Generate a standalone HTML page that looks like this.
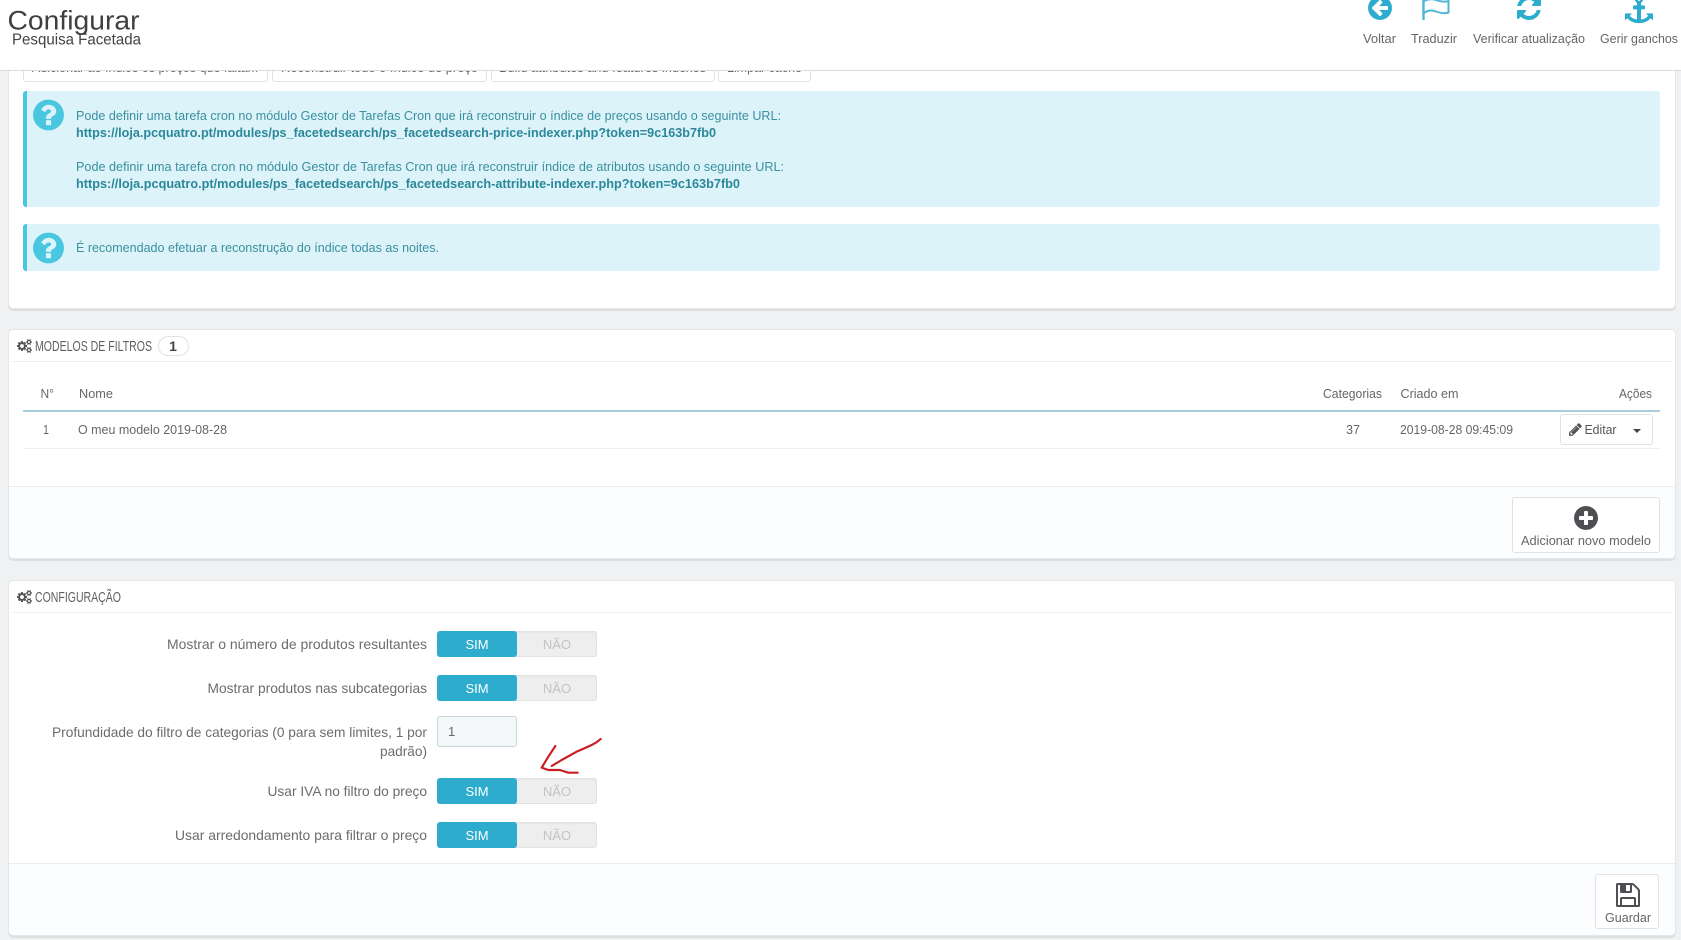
<!DOCTYPE html>
<html lang="pt">
<head>
<meta charset="utf-8">
<title>Configurar - Pesquisa Facetada</title>
<style>
html,body{margin:0;padding:0;background:#eff1f2;width:1681px;height:940px;overflow:hidden;position:relative}
div{box-sizing:border-box;position:absolute}
.panel{left:7.5px;width:1668px;background:#fff;border:1px solid #e4e6e8;border-radius:5px;box-shadow:0 2px 0 rgba(0,0,0,.07)}
.foot{background:#fcfdfe;border-top:1px solid #eaedef;left:8.5px;width:1666px}
.line{background:#eef0f2}
.alert{left:23px;width:1637px;background:#dcf4f9;border-left:4px solid #4ac7e0;border-radius:3px}
.btn{background:#fff;border:1px solid #dfe3e5;border-radius:3px}
.sw{left:437px;width:160px;height:26px;background:#eee;border-radius:3px;box-shadow:inset 0 0 0 1px #e2e2e2,inset 0 1px 2px rgba(0,0,0,.08)}
.sw:before{content:"";position:absolute;left:0;top:0;width:80px;height:26px;background:#2eacce;border-radius:3px}
#main{position:absolute;left:0;top:0;z-index:2}
#head{left:0;top:0;width:1681px;height:71px;background:#fff;border-bottom:1px solid #d9dcde;z-index:3}
text{font-family:"Liberation Sans",Arial,sans-serif;font-size:13px;fill:#666}
.h{font-size:14.5px;fill:#5f5f5f}
.i{fill:#3a8fa0}
.b{font-weight:bold;fill:#2b8799}
.l{font-size:14px;fill:#6c6c6c}
.s{font-size:13px;fill:#fff}
.n{font-size:13px;fill:#c3c3c3}
</style>
</head>
<body>

<div class="panel" style="top:-10px;height:319px"></div>
<div class="btn" style="left:23px;top:50px;width:245px;height:32px"></div>
<div class="btn" style="left:271.5px;top:50px;width:215px;height:32px"></div>
<div class="btn" style="left:491px;top:50px;width:224px;height:32px"></div>
<div class="btn" style="left:718px;top:50px;width:93px;height:32px"></div>
<div class="alert" style="top:91px;height:116px"></div>
<div class="alert" style="top:224px;height:47px"></div>

<div class="panel" style="top:329px;height:230px"></div>
<div class="line" style="left:12px;width:1660px;top:361px;height:1px"></div>
<div class="line" style="left:23px;width:1637px;top:410px;height:2px;background:#a9cedb"></div>
<div class="line" style="left:23px;width:1637px;top:448px;height:1px"></div>
<div class="btn" style="left:1560px;top:414px;width:93px;height:31px"></div>
<div class="foot" style="top:486px;height:72px;border-radius:0 0 5px 5px"></div>
<div class="btn" style="left:1512px;top:497px;width:148px;height:56px"></div>
<div style="left:158px;top:336px;width:31px;height:20px;background:#fff;border:1px solid #dfe3e5;border-radius:10px"></div>

<div class="panel" style="top:580px;height:356px"></div>
<div class="line" style="left:12px;width:1660px;top:612px;height:1px"></div>
<div class="sw" style="top:631px"></div>
<div class="sw" style="top:675px"></div>
<div style="left:437px;top:716px;width:80px;height:31px;background:#f5f8f9;border:1px solid #c7d6db;border-radius:3px"></div>
<div class="sw" style="top:778px"></div>
<div class="sw" style="top:822px"></div>
<div class="foot" style="top:863px;height:72px;border-radius:0 0 5px 5px"></div>
<div class="btn" style="left:1595px;top:874px;width:64px;height:55px"></div>

<svg id="main" width="1681" height="940" viewBox="0 0 1681 940" xmlns="http://www.w3.org/2000/svg">
  <!-- clipped toolbar buttons -->
  <text x="32" y="72" textLength="226" lengthAdjust="spacingAndGlyphs">Adicionar ao índice os preços que faltam</text>
  <text x="281" y="72" textLength="197" lengthAdjust="spacingAndGlyphs">Reconstruir todo o índice de preço</text>
  <text x="499" y="72" textLength="207" lengthAdjust="spacingAndGlyphs">Build attributes and features indexes</text>
  <text x="727" y="72" textLength="75" lengthAdjust="spacingAndGlyphs">Limpar cache</text>

  <!-- alert 1 -->
  <svg x="30.500" y="97" width="36" height="36" viewBox="0 0 1792 1792"><path fill="#4ac7e0" d="M1024 1376v-192q0-14-9-23t-23-9h-192q-14 0-23 9t-9 23v192q0 14 9 23t23 9h192q14 0 23-9t9-23zm256-672q0-88-55.500-163t-138.500-116-170-41q-243 0-371 213-15 24 8 42l132 100q7 6 19 6 16 0 25-12 53-68 86-92 34-24 86-24 48 0 85.500 26t37.500 59q0 38-20 61t-68 45q-63 28-115.500 86.500t-52.500 125.500v36q0 14 9 23t23 9h192q14 0 23-9t9-23q0-19 21.500-49.500t54.500-49.500q32-18 49-28.500t46-35 44.500-48 28-60.500 12.500-81zm384 192q0 209-103 385.500t-279.500 279.500-385.500 103-385.500-103-279.500-279.500-103-385.500 103-385.500 279.500-279.500 385.500-103 385.500 103 279.500 279.500 103 385.500z"/></svg>
  <text class="i" x="76" y="120" textLength="705" lengthAdjust="spacingAndGlyphs">Pode definir uma tarefa cron no módulo Gestor de Tarefas Cron que irá reconstruir o índice de preços usando o seguinte URL:</text>
  <text class="b" x="76" y="137" textLength="640" lengthAdjust="spacingAndGlyphs">https://loja.pcquatro.pt/modules/ps_facetedsearch/ps_facetedsearch-price-indexer.php?token=9c163b7fb0</text>
  <text class="i" x="76" y="171" textLength="708" lengthAdjust="spacingAndGlyphs">Pode definir uma tarefa cron no módulo Gestor de Tarefas Cron que irá reconstruir índice de atributos usando o seguinte URL:</text>
  <text class="b" x="76" y="188" textLength="664" lengthAdjust="spacingAndGlyphs">https://loja.pcquatro.pt/modules/ps_facetedsearch/ps_facetedsearch-attribute-indexer.php?token=9c163b7fb0</text>

  <!-- alert 2 -->
  <svg x="30.500" y="230" width="36" height="36" viewBox="0 0 1792 1792"><path fill="#4ac7e0" d="M1024 1376v-192q0-14-9-23t-23-9h-192q-14 0-23 9t-9 23v192q0 14 9 23t23 9h192q14 0 23-9t9-23zm256-672q0-88-55.500-163t-138.500-116-170-41q-243 0-371 213-15 24 8 42l132 100q7 6 19 6 16 0 25-12 53-68 86-92 34-24 86-24 48 0 85.500 26t37.500 59q0 38-20 61t-68 45q-63 28-115.500 86.500t-52.500 125.500v36q0 14 9 23t23 9h192q14 0 23-9t9-23q0-19 21.500-49.500t54.500-49.500q32-18 49-28.500t46-35 44.500-48 28-60.500 12.500-81zm384 192q0 209-103 385.500t-279.500 279.500-385.500 103-385.500-103-279.500-279.500-103-385.500 103-385.500 279.500-279.500 385.500-103 385.500 103 279.500 279.500 103 385.500z"/></svg>
  <text class="i" x="76" y="252" textLength="363" lengthAdjust="spacingAndGlyphs">É recomendado efetuar a reconstrução do índice todas as noites.</text>

  <!-- panel 2 heading -->
  <svg x="17" y="339" width="15" height="14" viewBox="0 0 1920 1792"><path fill="#555" d="M896 896q0-106-75-181t-181-75-181 75-75 181 75 181 181 75 181-75 75-181zm768 512q0-52-38-90t-90-38-90 38-38 90q0 53 37.500 90.500t90.500 37.500 90.500-37.500 37.500-90.500zm0-1024q0-52-38-90t-90-38-90 38-38 90q0 53 37.500 90.500t90.500 37.500 90.500-37.500 37.500-90.500zm-384 421v185q0 10-7 19.500t-16 10.500l-155 24q-11 35-32 76 34 48 90 115 7 11 7 20 0 12-7 19-23 30-82.500 89.500t-78.500 59.500q-11 0-21-7l-115-90q-37 19-77 31-11 108-23 155-7 24-30 24h-186q-11 0-20-7.500t-10-17.500l-23-153q-34-10-75-31l-118 89q-7 7-20 7-11 0-21-8-144-133-144-160 0-9 7-19 10-14 41-53t47-61q-23-44-35-82l-152-24q-10-1-17-9.500t-7-19.500v-185q0-10 7-19.500t16-10.500l155-24q11-35 32-76-34-48-90-115-7-11-7-20 0-12 7-20 22-30 82-89t79-59q11 0 21 7l115 90q34-18 77-32 11-108 23-154 7-24 30-24h186q11 0 20 7.500t10 17.500l23 153q34 10 75 31l118-89q8-7 20-7 11 0 21 8 144 133 144 160 0 8-7 19-12 16-42 54t-45 60q23 48 34 82l152 23q10 2 17 10.500t7 19.500zm640 533v140q0 16-149 31-12 27-30 52 51 113 51 138 0 4-4 7-122 71-124 71-8 0-46-47t-52-68q-20 2-30 2t-30-2q-14 21-52 68t-46 47q-2 0-124-71-4-3-4-7 0-25 51-138-18-25-30-52-149-15-149-31v-140q0-16 149-31 13-29 30-52-51-113-51-138 0-4 4-7 4-2 35-20t59-34 30-16q8 0 46 46.500t52 67.500q20-2 30-2t30 2q51-71 92-112l6-2q4 0 124 70 4 3 4 7 0 25-51 138 17 23 30 52 149 15 149 31zm0-1024v140q0 16-149 31-12 27-30 52 51 113 51 138 0 4-4 7-122 71-124 71-8 0-46-47t-52-68q-20 2-30 2t-30-2q-14 21-52 68t-46 47q-2 0-124-71-4-3-4-7 0-25 51-138-18-25-30-52-149-15-149-31v-140q0-16 149-31 13-29 30-52-51-113-51-138 0-4 4-7 4-2 35-20t59-34 30-16q8 0 46 46.500t52 67.500q20-2 30-2t30 2q51-71 92-112l6-2q4 0 124 70 4 3 4 7 0 25-51 138 17 23 30 52 149 15 149 31z"/></svg>
  <text class="h" x="35" y="351" textLength="117" lengthAdjust="spacingAndGlyphs">MODELOS DE FILTROS</text>
  <text x="173" y="351" text-anchor="middle" style="font-weight:bold;font-size:14px;fill:#444">1</text>

  <!-- table -->
  <text x="40.500" y="398" textLength="13.500" lengthAdjust="spacingAndGlyphs">N°</text>
  <text x="79" y="398" textLength="34" lengthAdjust="spacingAndGlyphs">Nome</text>
  <text x="1323" y="398" textLength="59" lengthAdjust="spacingAndGlyphs">Categorias</text>
  <text x="1400.500" y="398" textLength="58" lengthAdjust="spacingAndGlyphs">Criado em</text>
  <text x="1619" y="398" textLength="33" lengthAdjust="spacingAndGlyphs">Ações</text>
  <text x="43" y="434" textLength="6" lengthAdjust="spacingAndGlyphs">1</text>
  <text x="78" y="434" textLength="149" lengthAdjust="spacingAndGlyphs">O meu modelo 2019-08-28</text>
  <text x="1346" y="434" textLength="14" lengthAdjust="spacingAndGlyphs">37</text>
  <text x="1400" y="434" textLength="113" lengthAdjust="spacingAndGlyphs">2019-08-28 09:45:09</text>

  <svg x="1568" y="422" width="15" height="15" viewBox="0 0 1792 1792"><path fill="#555" d="M491 1536l91-91-235-235-91 91v107h128v128h107zm523-928q0-22-22-22-10 0-17 7l-542 542q-7 7-7 17 0 22 22 22 10 0 17-7l542-542q7-7 7-17zm-54-192l416 416-832 832h-416v-416zm683 96q0 53-37 90l-166 166-416-416 166-165q36-38 90-38 53 0 91 38l235 234q37 39 37 91z"/></svg>
  <text x="1584.500" y="434" textLength="32" lengthAdjust="spacingAndGlyphs" style="fill:#555">Editar</text>
  <path d="M1633 429h8l-4 4z" fill="#444"/>

  <!-- add button -->
  <svg x="1572" y="504" width="28" height="28" viewBox="0 0 1792 1792"><path fill="#4d4f52" d="M1344 960v-128q0-26-19-45t-45-19h-256v-256q0-26-19-45t-45-19h-128q-26 0-45 19t-19 45v256h-256q-26 0-45 19t-19 45v128q0 26 19 45t45 19h256v256q0 26 19 45t45 19h128q26 0 45-19t19-45v-256h256q26 0 45-19t19-45zm320-64q0 209-103 385.500t-279.500 279.500-385.500 103-385.500-103-279.500-279.500-103-385.500 103-385.500 279.500-279.500 385.500-103 385.500 103 279.500 279.500 103 385.500z"/></svg>
  <text x="1521" y="545" textLength="130" lengthAdjust="spacingAndGlyphs">Adicionar novo modelo</text>

  <!-- panel 3 heading -->
  <svg x="17" y="590" width="15" height="14" viewBox="0 0 1920 1792"><path fill="#555" d="M896 896q0-106-75-181t-181-75-181 75-75 181 75 181 181 75 181-75 75-181zm768 512q0-52-38-90t-90-38-90 38-38 90q0 53 37.500 90.500t90.500 37.500 90.500-37.500 37.500-90.500zm0-1024q0-52-38-90t-90-38-90 38-38 90q0 53 37.500 90.500t90.500 37.500 90.500-37.500 37.500-90.500zm-384 421v185q0 10-7 19.500t-16 10.500l-155 24q-11 35-32 76 34 48 90 115 7 11 7 20 0 12-7 19-23 30-82.500 89.500t-78.500 59.500q-11 0-21-7l-115-90q-37 19-77 31-11 108-23 155-7 24-30 24h-186q-11 0-20-7.500t-10-17.500l-23-153q-34-10-75-31l-118 89q-7 7-20 7-11 0-21-8-144-133-144-160 0-9 7-19 10-14 41-53t47-61q-23-44-35-82l-152-24q-10-1-17-9.500t-7-19.500v-185q0-10 7-19.500t16-10.500l155-24q11-35 32-76-34-48-90-115-7-11-7-20 0-12 7-20 22-30 82-89t79-59q11 0 21 7l115 90q34-18 77-32 11-108 23-154 7-24 30-24h186q11 0 20 7.500t10 17.500l23 153q34 10 75 31l118-89q8-7 20-7 11 0 21 8 144 133 144 160 0 8-7 19-12 16-42 54t-45 60q23 48 34 82l152 23q10 2 17 10.500t7 19.500zm640 533v140q0 16-149 31-12 27-30 52 51 113 51 138 0 4-4 7-122 71-124 71-8 0-46-47t-52-68q-20 2-30 2t-30-2q-14 21-52 68t-46 47q-2 0-124-71-4-3-4-7 0-25 51-138-18-25-30-52-149-15-149-31v-140q0-16 149-31 13-29 30-52-51-113-51-138 0-4 4-7 4-2 35-20t59-34 30-16q8 0 46 46.500t52 67.500q20-2 30-2t30 2q51-71 92-112l6-2q4 0 124 70 4 3 4 7 0 25-51 138 17 23 30 52 149 15 149 31zm0-1024v140q0 16-149 31-12 27-30 52 51 113 51 138 0 4-4 7-122 71-124 71-8 0-46-47t-52-68q-20 2-30 2t-30-2q-14 21-52 68t-46 47q-2 0-124-71-4-3-4-7 0-25 51-138-18-25-30-52-149-15-149-31v-140q0-16 149-31 13-29 30-52-51-113-51-138 0-4 4-7 4-2 35-20t59-34 30-16q8 0 46 46.500t52 67.500q20-2 30-2t30 2q51-71 92-112l6-2q4 0 124 70 4 3 4 7 0 25-51 138 17 23 30 52 149 15 149 31z"/></svg>
  <text class="h" x="35" y="602" textLength="86" lengthAdjust="spacingAndGlyphs">CONFIGURAÇÃO</text>

  <!-- form rows -->
  <text class="l" x="167" y="649" textLength="260" lengthAdjust="spacingAndGlyphs">Mostrar o número de produtos resultantes</text>
  <text class="s" x="477" y="649" text-anchor="middle">SIM</text><text class="n" x="557" y="649" text-anchor="middle">NÃO</text>

  <text class="l" x="207.500" y="693" textLength="219.500" lengthAdjust="spacingAndGlyphs">Mostrar produtos nas subcategorias</text>
  <text class="s" x="477" y="693" text-anchor="middle">SIM</text><text class="n" x="557" y="693" text-anchor="middle">NÃO</text>

  <text class="l" x="52" y="737" textLength="375" lengthAdjust="spacingAndGlyphs">Profundidade do filtro de categorias (0 para sem limites, 1 por</text>
  <text class="l" x="380" y="756" textLength="47" lengthAdjust="spacingAndGlyphs">padrão)</text>
  <text x="448" y="736">1</text>

  <text class="l" x="267.500" y="796" textLength="159.500" lengthAdjust="spacingAndGlyphs">Usar IVA no filtro do preço</text>
  <text class="s" x="477" y="796" text-anchor="middle">SIM</text><text class="n" x="557" y="796" text-anchor="middle">NÃO</text>

  <text class="l" x="175" y="840" textLength="252" lengthAdjust="spacingAndGlyphs">Usar arredondamento para filtrar o preço</text>
  <text class="s" x="477" y="840" text-anchor="middle">SIM</text><text class="n" x="557" y="840" text-anchor="middle">NÃO</text>

  <!-- red hand-drawn arrow -->
  <g transform="translate(480 720) scale(.3333)" fill="none" stroke="#c81e24" stroke-width="6.500" stroke-linecap="round" stroke-linejoin="round">
    <path d="M362 57Q350 68 335 75T290 95L245 120 215 138"/>
    <path d="M226 78L205 110 185 143 205 150 240 150 265 158 293 158"/>
  </g>

  <!-- save button -->
  <svg x="1614" y="881" width="28" height="28" viewBox="0 0 1792 1792"><path fill="#4d4f52" d="M512 1536h768v-384h-768v384zm896 0h128v-896q0-14-10-38.500t-20-34.500l-281-281q-10-10-34-20t-39-10v416q0 40-28 68t-68 28h-576q-40 0-68-28t-28-68v-416h-128v1280h128v-416q0-40 28-68t68-28h832q40 0 68 28t28 68v416zm-384-928v-320q0-13-9.500-22.500t-22.500-9.500h-192q-13 0-22.500 9.500t-9.500 22.500v320q0 13 9.500 22.500t22.500 9.500h192q13 0 22.500-9.500t9.500-22.500zm640 32v928q0 40-28 68t-68 28h-1344q-40 0-68-28t-28-68v-1344q0-40 28-68t68-28h928q40 0 88 20t76 48l280 280q28 28 48 76t20 88z"/></svg>
  <text x="1605" y="922" textLength="46" lengthAdjust="spacingAndGlyphs">Guardar</text>
</svg>

<div id="head">
<svg width="1681" height="70" viewBox="0 0 1681 70" xmlns="http://www.w3.org/2000/svg" style="display:block">
  <text x="7.500" y="29.500" textLength="132" lengthAdjust="spacingAndGlyphs" style="font-size:27px;fill:#3f3f3f">Configurar</text>
  <text x="12" y="44.500" textLength="129" lengthAdjust="spacingAndGlyphs" style="font-size:15.500px;fill:#444">Pesquisa Facetada</text>

  <svg x="1366" y="-6" width="28" height="28" viewBox="0 0 1792 1792"><path fill="#2eacce" d="M1408 960v-128q0-26-18.500-45t-45.500-19h-502l189-189q19-19 19-45t-19-45l-91-91q-18-18-45-18t-45 18l-362 362-91 91q-18 18-18 45t18 45l91 91 362 362q18 18 45 18t45-18l91-91q18-18 18-45t-18-45l-189-189h502q27 0 45.500-19t18.500-45zm256-64q0 209-103 385.500t-279.500 279.500-385.500 103-385.500-103-279.500-279.500-103-385.500 103-385.500 279.500-279.500 385.500-103 385.500 103 279.500 279.500 103 385.500z"/></svg>
  <path d="M1423.500 -2V20" stroke="#4fb6d3" stroke-width="2.400" fill="none"/>
  <path d="M1424 13C1428 10 1432 10 1436 11.500S1444 14 1448.500 12.500V1C1444 2.500 1440 1.500 1436 0S1428 -1 1424 1" stroke="#4fb6d3" stroke-width="2" fill="none"/>
  <svg x="1515" y="-6" width="28" height="28" viewBox="0 0 1792 1792"><path fill="#2eacce" d="M1639 1056q0 5-1 7-64 268-268 434.500t-478 166.500q-146 0-282.500-55t-243.500-157l-129 129q-19 19-45 19t-45-19-19-45v-448q0-26 19-45t45-19h448q26 0 45 19t19 45-19 45l-137 137q71 66 161 102t187 36q134 0 250-65t186-179q11-17 53-117 8-23 30-23h192q13 0 22.500 9.500t9.500 22.500zm25-800v448q0 26-19 45t-45 19h-448q-26 0-45-19t-19-45 19-45l138-138q-148-137-349-137-134 0-250 65t-186 179q-11 17-53 117-8 23-30 23h-199q-13 0-22.500-9.500t-9.500-22.500v-7q65-268 270-434.500t480-166.500q146 0 284 55.500t245 156.500l130-129q19-19 45-19t45 19 19 45z"/></svg>
  <svg x="1625" y="-4" width="28" height="28" viewBox="0 0 1792 1792"><path fill="#2eacce" d="M960 256q0-26-19-45t-45-19-45 19-19 45 19 45 45 19 45-19 19-45zm832 888v352q0 22-20 30-8 2-12 2-12 0-23-9l-93-93q-119 143-318.500 226.500t-429.500 83.500-429.500-83.500-318.500-226.500l-93 93q-9 9-23 9-4 0-12-2-20-8-20-30v-352q0-14 9-23t23-9h352q22 0 30 20 8 19-7 35l-100 100q67 91 189.500 153.500t271.500 82.500v-647h-192q-26 0-45-19t-19-45v-128q0-26 19-45t45-19h192v-163q-58-34-93-92.500t-35-128.500q0-106 75-181t181-75 181 75 75 181q0 70-35 128.500t-93 92.500v163h192q26 0 45 19t19 45v128q0 26-19 45t-45 19h-192v647q149-20 271.500-82.500t189.500-153.500l-100-100q-15-16-7-35 8-20 30-20h352q14 0 23 9t9 23z"/></svg>

  <text x="1363" y="43" textLength="33" lengthAdjust="spacingAndGlyphs">Voltar</text>
  <text x="1411" y="43" textLength="46" lengthAdjust="spacingAndGlyphs">Traduzir</text>
  <text x="1473" y="43" textLength="112" lengthAdjust="spacingAndGlyphs">Verificar atualização</text>
  <text x="1600" y="43" textLength="78" lengthAdjust="spacingAndGlyphs">Gerir ganchos</text>
</svg>
</div>

</body>
</html>
